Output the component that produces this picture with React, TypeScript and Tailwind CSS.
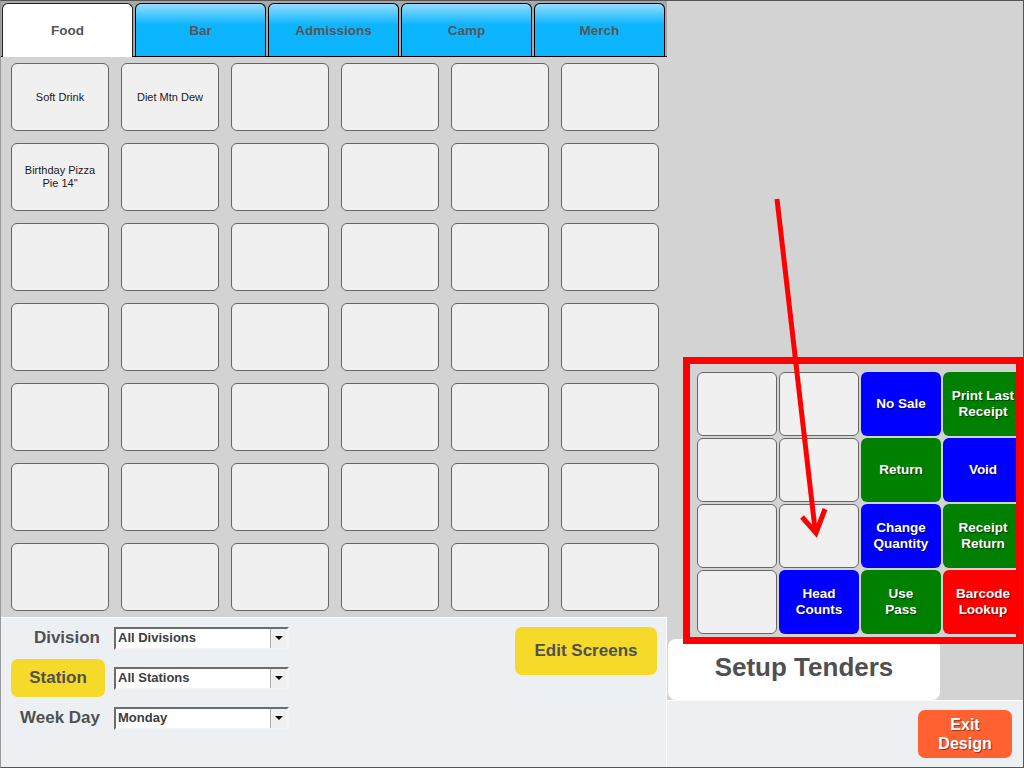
import React from "react";

const tabs = ["Food", "Bar", "Admissions", "Camp", "Merch"];

const items: Record<number, string[]> = {
  0: ["Soft Drink"],
  1: ["Diet Mtn Dew"],
  6: ["Birthday Pizza", 'Pie 14"'],
};

type Tender = { lines?: string[]; color?: string };

const blue = "bg-[#0000ff]";
const green = "bg-[#008000]";
const red = "bg-[#ff0000]";

const tenders: Tender[] = [
  {}, {}, { lines: ["No Sale"], color: blue }, { lines: ["Print Last", "Receipt"], color: green },
  {}, {}, { lines: ["Return"], color: green }, { lines: ["Void"], color: blue },
  {}, {}, { lines: ["Change", "Quantity"], color: blue }, { lines: ["Receipt", "Return"], color: green },
  {}, { lines: ["Head", "Counts"], color: blue }, { lines: ["Use", "Pass"], color: green }, { lines: ["Barcode", "Lookup"], color: red },
];

function Select({ value }: { value: string }) {
  return (
    <div className="flex h-[23px] w-[175px] border-2 border-t-[#6d6d6d] border-l-[#6d6d6d] border-b-[#f4f4f4] border-r-[#f4f4f4] bg-white">
      <div className="flex-1 flex items-center pl-[2px] text-[13px] font-bold text-[#3c3c3c]">{value}</div>
      <div className="w-[17px] flex items-center justify-center bg-[#f0f0f0] border-l border-[#a8a8a8]">
        <span className="block w-0 h-0 border-l-[4px] border-r-[4px] border-t-[4px] border-l-transparent border-r-transparent border-t-black" />
      </div>
    </div>
  );
}

export default function App() {
  return (
    <div className="relative flex w-[1024px] h-[768px] overflow-hidden border border-[#555] border-l-[#9a9a9a] bg-[#d3d3d3] font-['Liberation_Sans',Arial,sans-serif]">
      {/* left: menu screens */}
      <div className="w-[666px] flex flex-col">
        <div className="h-[56px] flex items-end gap-[2px] pl-[1px] bg-[#a8a8a8] border-b border-black">
          {tabs.map((t, i) =>
            i === 0 ? (
              <div
                key={t}
                className="relative -mb-px w-[131px] h-[54px] pt-[2px] flex items-center justify-center rounded-t-[6px] border-x border-t border-[#222] bg-white text-[13.5px] font-bold text-[#555]"
              >
                {t}
              </div>
            ) : (
              <div
                key={t}
                className="w-[131px] h-[53px] pt-[2px] flex items-center justify-center rounded-t-[6px] border-x border-t border-black bg-[linear-gradient(to_bottom,#93dcff,#0db5ff_40%,#0cb4ff)] text-[13.5px] font-bold text-[#555]"
              >
                {t}
              </div>
            )
          )}
        </div>

        <div className="flex-1 pt-[6px] pl-[10px] grid grid-cols-[repeat(6,98px)] auto-rows-[68px] gap-[12px] content-start">
          {Array.from({ length: 42 }).map((_, i) => (
            <div
              key={i}
              className="flex flex-col items-center justify-center rounded-[6px] border border-[#666] bg-[#f0f0f0] text-[11px] leading-[13px] text-[#1a1a1a]"
            >
              {items[i]?.map((l) => <span key={l}>{l}</span>)}
            </div>
          ))}
        </div>

        <div className="h-[150px] flex border-t border-r border-white bg-[#ecf0f3]">
          <div className="flex flex-col ml-[10px]">
            <div className="h-[40px] flex items-center">
              <div className="w-[94px] pr-[5px] text-right text-[17px] font-bold text-[#505050]">Division</div>
              <div className="ml-[9px]"><Select value="All Divisions" /></div>
            </div>
            <div className="h-[40px] flex items-center">
              <div className="w-[94px] h-[38px] flex items-center justify-center rounded-[7px] bg-[#f5da2a] text-[17px] font-bold text-[#505050]">
                Station
              </div>
              <div className="ml-[9px]"><Select value="All Stations" /></div>
            </div>
            <div className="h-[40px] flex items-center">
              <div className="w-[94px] pr-[5px] text-right text-[17px] font-bold text-[#505050]">Week Day</div>
              <div className="ml-[9px]"><Select value="Monday" /></div>
            </div>
          </div>
          <div className="ml-auto mr-[9px] mt-[9px] w-[142px] h-[48px] flex items-center justify-center rounded-[7px] bg-[#f5da2a] text-[17px] font-bold text-[#505050]">
            Edit Screens
          </div>
        </div>
      </div>

      {/* right: tenders */}
      <div className="flex-1 flex flex-col">
        <div className="flex-1 flex flex-col justify-end">
          <div className="self-end mb-[5px] grid grid-cols-[repeat(4,80px)] auto-rows-[64px] gap-[2px]">
            {tenders.map((t, i) =>
              t.lines ? (
                <div
                  key={i}
                  className={`${t.color} flex flex-col items-center justify-center rounded-[6px] text-[13.5px] leading-[16px] font-bold text-white [text-shadow:1px_1px_1px_rgba(0,0,0,0.55)]`}
                >
                  {t.lines.map((l) => <span key={l}>{l}</span>)}
                </div>
              ) : (
                <div key={i} className="rounded-[6px] border border-[#666] bg-[#f0f0f0]" />
              )
            )}
          </div>
          <div className="ml-[1px] w-[272px] h-[61px] pb-[4px] flex items-center justify-center rounded-[8px] bg-white text-[26px] font-bold text-[#505050]">
            Setup Tenders
          </div>
        </div>
        <div className="h-[67px] flex justify-end border-t border-white bg-[#ecf0f3]">
          <div className="mt-[9px] mr-[11px] w-[94px] h-[48px] flex flex-col items-center justify-center rounded-[7px] bg-[#ff6131] text-[16px] leading-[19px] font-bold text-white [text-shadow:1px_1px_1px_rgba(0,0,0,0.45)]">
            <span>Exit</span>
            <span>Design</span>
          </div>
        </div>
      </div>

      {/* annotation overlay */}
      <div className="absolute left-[682px] top-[356px] w-[340px] h-[287px] border-[7px] border-[#ff0000] pointer-events-none" />
      <svg className="absolute left-0 top-0 pointer-events-none" width="1024" height="768">
        <line x1="776" y1="198" x2="814" y2="528" stroke="#ff0000" strokeWidth="5" />
        <polyline points="801,516 815,532 824,508" fill="none" stroke="#ff0000" strokeWidth="5" strokeLinejoin="miter" />
      </svg>
    </div>
  );
}
